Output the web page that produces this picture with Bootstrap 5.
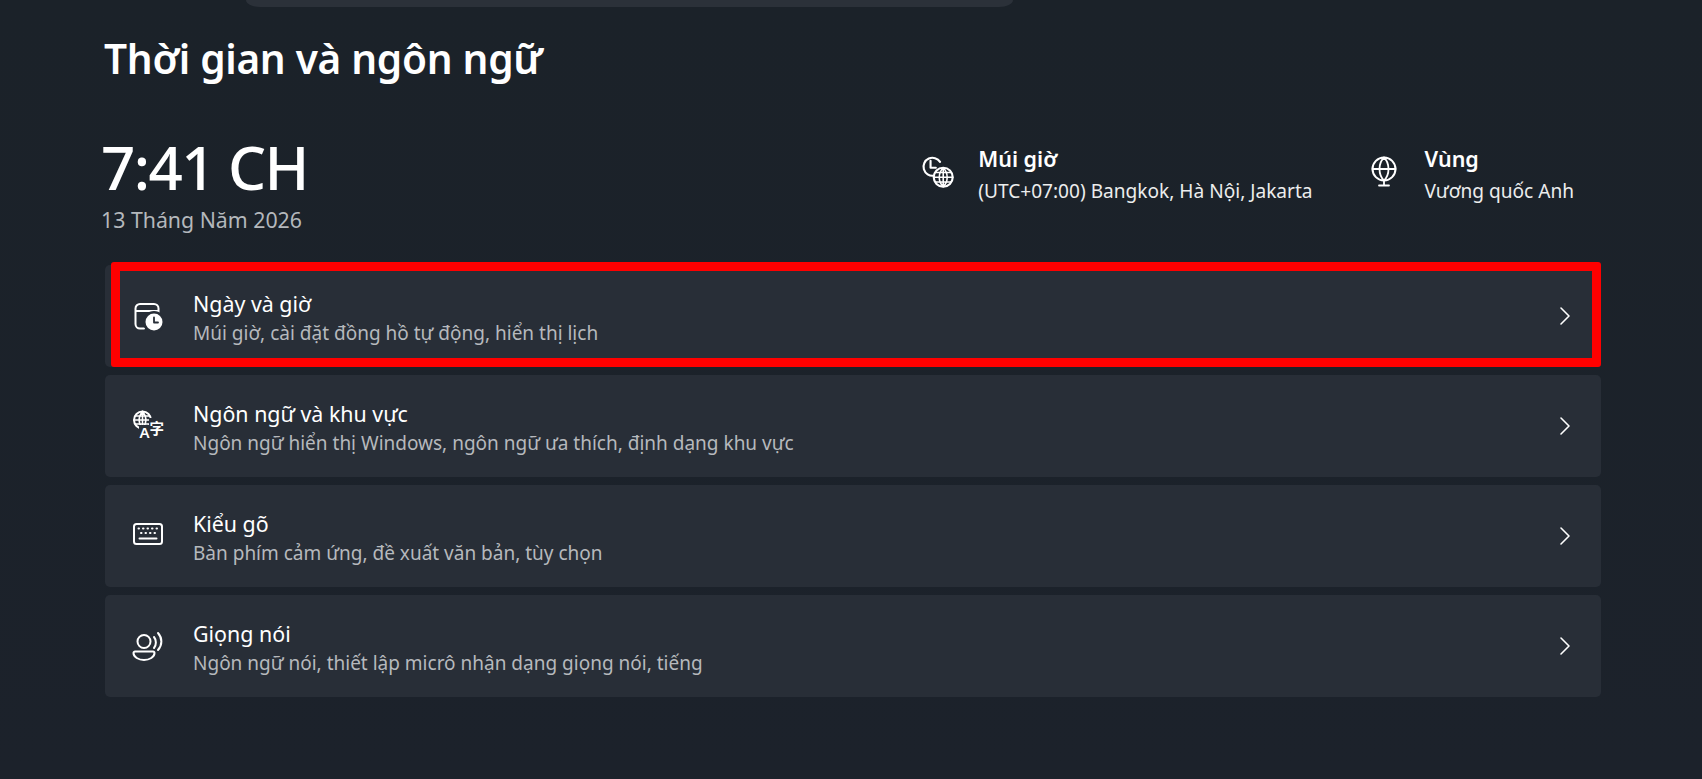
<!DOCTYPE html>
<html lang="vi">
<head>
  <meta charset="UTF-8" />
  <meta name="viewport" content="width=device-width, initial-scale=1.0" />
  <title>Thời gian và ngôn ngữ</title>
  <link href="https://cdn.jsdelivr.net/npm/bootstrap@5.3.3/dist/css/bootstrap.min.css" rel="stylesheet" />
  <style>
    html, body { height: 100%; }
    body {
      background: linear-gradient(180deg, #1b2229 0%, #1c222b 100%);
      color: #fff;
      font-family: "Noto Sans", "Open Sans", sans-serif;
      overflow: hidden;
    }
    .search-stub {
      width: 767px;
      height: 7px;
      margin-left: 246px;
      background: #2b3139;
      border-radius: 0 0 14px 14px / 0 0 7px 7px;
    }
    .page-wrap { padding: 0 101px 0 105px; }
    .page-title { font-size: 40.6px; line-height: 54px; font-weight: 600; margin: 25px 0 0 -1px; letter-spacing: -.3px; }
    .clock-time { font-size: 60px; line-height: 70px; font-weight: 500; margin: 0 0 0 -4px; letter-spacing: -1.6px; }
    .clock-date { font-size: 21.3px; line-height: 28px; color: #b4b8bc; margin: 4px 0 0 -4px; }
    .head-row { margin-top: 46px; height: 133px; }
    .info-group { padding-top: 13px; }
    .info-title { font-size: 21.5px; line-height: 28px; font-weight: 600; }
    .info-sub { font-size: 19.1px; line-height: 30px; margin-top: 3px; color: #eceded; }
    .info-zone { margin-right: 56px; }
    .info-region { margin-right: 27px; }
    .info-zone svg { margin-right: 20px; }
    .info-region svg { margin-right: 24px; }
    .setting-card {
      height: 102px;
      background: #282e37;
      border: 0;
      border-radius: 5px;
      color: #fff;
      padding: 0 30px 0 27px;
    }
    .setting-card + .setting-card { margin-top: 8px; }
    .card-copy { margin-left: 29px; padding-top: 4px; }
    .card-name { font-size: 21.4px; line-height: 28px; }
    .card-desc { font-size: 19px; line-height: 26px; margin-top: 2px; color: #b6b9bd; }
    .red-mark {
      position: absolute;
      top: -3px; right: 0; bottom: 0; left: 6px;
      border: 9px solid #f00;
      border-radius: 3px;
      pointer-events: none;
    }
    .ico { stroke: #fff; fill: none; stroke-width: 2; stroke-linecap: round; stroke-linejoin: round; flex: none; overflow: visible; }
    .ico text { stroke: none; fill: #fff; }
    .info-ico { margin-top: 9px; }
  </style>
</head>
<body>
  <div class="search-stub"></div>
  <main class="page-wrap">
    <h1 class="page-title">Thời gian và ngôn ngữ</h1>

    <!-- clock and zone info -->
    <div class="head-row d-flex justify-content-between">
      <div>
        <div class="clock-time">7:41 CH</div>
        <div class="clock-date">13 Tháng Năm 2026</div>
      </div>
      <div class="d-flex info-group">
        <div class="d-flex info-zone">
          <svg class="ico info-ico" width="38" height="38" viewBox="0 0 36 36">
            <path d="M13 20.500A8.500 8.500 0 1 1 19 7.500"/>
            <path d="M10 6.500v6.500h5"/>
            <circle cx="22" cy="22" r="9"/>
            <path d="M13 22h18M14.500 17.500h15M14.500 26.500h15M22 13v18M22 13c-5 5-5 13 0 18M22 13c5 5 5 13 0 18" stroke-width="1.500"/>
          </svg>
          <div>
            <div class="info-title">Múi giờ</div>
            <div class="info-sub">(UTC+07:00) Bangkok, Hà Nội, Jakarta</div>
          </div>
        </div>
        <div class="d-flex info-region">
          <svg class="ico info-ico" width="32" height="36" viewBox="0 0 32 36">
            <circle cx="15" cy="15" r="11.500"/>
            <path d="M3.500 15h23M15 3.500c-6 6-6 17 0 23M15 3.500c6 6 6 17 0 23M15 26.500v4.500M10 31.500h10" stroke-width="1.800"/>
          </svg>
          <div>
            <div class="info-title">Vùng</div>
            <div class="info-sub">Vương quốc Anh</div>
          </div>
        </div>
      </div>
    </div>

    <!-- settings list -->
    <div class="settings-list">
      <a class="card setting-card position-relative flex-row align-items-center text-decoration-none" href="#">
        <svg class="ico" width="32" height="32" viewBox="0 0 32 32">
          <path d="M12 28.500H8a4.500 4.500 0 0 1-4.500-4.500V8.500A4.500 4.500 0 0 1 8 4h14a4.500 4.500 0 0 1 4.500 4.500v5M3.500 11h23"/>
          <circle cx="22" cy="22" r="11" style="fill:#282e37;stroke:none"/>
          <circle cx="22" cy="22" r="8.500" style="fill:#fff;stroke:none"/>
          <path d="M22 17.500v5h4" style="stroke:#282e37" stroke-width="1.800"/>
        </svg>
        <div class="flex-grow-1 card-copy">
          <div class="card-name">Ngày và giờ</div>
          <div class="card-desc">Múi giờ, cài đặt đồng hồ tự động, hiển thị lịch</div>
        </div>
        <svg class="ico" width="12" height="18" viewBox="0 0 12 18"><path d="M2 1l8 8-8 8" stroke-width="1.600"/></svg>
        <span class="red-mark"></span>
      </a>
      <a class="card setting-card flex-row align-items-center text-decoration-none" href="#">
        <svg class="ico" width="32" height="32" viewBox="0 0 32 32">
          <circle cx="10.500" cy="10" r="8.500"/>
          <path d="M2 10h17M3.500 6h14M3.500 14h14M10.500 1.500v17M10.500 1.500c-4.500 5-4.500 12 0 17M10.500 1.500c4.500 5 4.500 12 0 17" stroke-width="1.500"/>
          <rect x="7" y="15" width="26" height="16" style="fill:#282e37;stroke:none"/>
          <rect x="17" y="8" width="15" height="12" style="fill:#282e37;stroke:none"/>
          <text x="7.500" y="27.500" font-family="Noto Sans" font-weight="600" font-size="15">A</text>
          <text x="17.500" y="23.500" font-family="Noto Sans CJK SC" font-weight="700" font-size="14.500">字</text>
        </svg>
        <div class="flex-grow-1 card-copy">
          <div class="card-name">Ngôn ngữ và khu vực</div>
          <div class="card-desc">Ngôn ngữ hiển thị Windows, ngôn ngữ ưa thích, định dạng khu vực</div>
        </div>
        <svg class="ico" width="12" height="18" viewBox="0 0 12 18"><path d="M2 1l8 8-8 8" stroke-width="1.600"/></svg>
      </a>
      <a class="card setting-card flex-row align-items-center text-decoration-none" href="#">
        <svg class="ico" width="32" height="32" viewBox="0 0 32 32">
          <rect x="2" y="4" width="28" height="20" rx="2.500"/>
          <path d="M6.500 8.500h.5M11 8.500h.5M15.500 8.500h.5M20 8.500h.5M24.500 8.500h.5M9 13h.5M13.500 13h.5M18 13h.5M22.500 13h.5M7.500 18.500h17"/>
        </svg>
        <div class="flex-grow-1 card-copy">
          <div class="card-name">Kiểu gõ</div>
          <div class="card-desc">Bàn phím cảm ứng, đề xuất văn bản, tùy chọn</div>
        </div>
        <svg class="ico" width="12" height="18" viewBox="0 0 12 18"><path d="M2 1l8 8-8 8" stroke-width="1.600"/></svg>
      </a>
      <a class="card setting-card flex-row align-items-center text-decoration-none" href="#">
        <svg class="ico" width="32" height="32" viewBox="0 0 32 32">
          <circle cx="12" cy="11.500" r="6.500"/>
          <path d="M3 21.500h18a1.500 1.500 0 0 1 1.500 1.500c0 4-5 7-10.500 7S1.500 27 1.500 23A1.500 1.500 0 0 1 3 21.500z"/>
          <path d="M22 7c2.500 3 2.500 8 0 11M26 3c4.500 5 4.500 12 0 17"/>
        </svg>
        <div class="flex-grow-1 card-copy">
          <div class="card-name">Giọng nói</div>
          <div class="card-desc">Ngôn ngữ nói, thiết lập micrô nhận dạng giọng nói, tiếng</div>
        </div>
        <svg class="ico" width="12" height="18" viewBox="0 0 12 18"><path d="M2 1l8 8-8 8" stroke-width="1.600"/></svg>
      </a>
    </div>
  </main>
  <script src="https://cdn.jsdelivr.net/npm/bootstrap@5.3.3/dist/js/bootstrap.bundle.min.js"></script>
</body>
</html>
